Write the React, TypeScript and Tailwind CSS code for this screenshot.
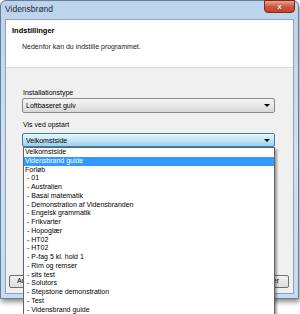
import React from "react";

const items = [
  { label: "Velkomstside" },
  { label: "Vidensbrand guide", selected: true },
  { label: "Forløb" },
  { label: "- 01", sub: true },
  { label: "- Australien", sub: true },
  { label: "- Basal matematik", sub: true },
  { label: "- Demonstration af Vidensbranden", sub: true },
  { label: "- Engelsk grammatik", sub: true },
  { label: "- Frikvarter", sub: true },
  { label: "- Hopoglær", sub: true },
  { label: "- HT02", sub: true },
  { label: "- HT02", sub: true },
  { label: "- P-fag 5 kl. hold 1", sub: true },
  { label: "- Rim og remser", sub: true },
  { label: "- sits test", sub: true },
  { label: "- Solutors", sub: true },
  { label: "- Stepstone demonstration", sub: true },
  { label: "- Test", sub: true },
  { label: "- Vidensbrand guide", sub: true },
];

function Arrow() {
  return <div className="w-0 h-0 border-x-[3px] border-t-[3px] border-x-transparent border-t-black" />;
}

export default function App() {
  return (
    <div className="relative w-[300px] h-[314px] overflow-hidden bg-white font-['Liberation_Sans',Arial,sans-serif] text-black">
      {/* Window */}
      <div className="w-[299px] h-[299px] flex flex-col rounded-t-[6px] border border-[#6a7f95] bg-gradient-to-b from-[#bcd3ec] via-[#cfe0f2] to-[#c6dbf1] shadow-[1px_3px_5px_rgba(0,0,0,0.45)]">
        {/* Title bar */}
        <div className="h-[18px] flex items-start justify-between pl-[4px] pr-[3px]">
          <span className="mt-[3px] text-[8.5px] leading-[11px] text-[#1e2a38]">Vidensbrønd</span>
          <div className="w-[31px] h-[13px] -mt-px flex items-center justify-center rounded-b-[4px] border border-[#7a2a1e] bg-gradient-to-b from-[#e9a493] via-[#d0573d] to-[#c2432a]">
            <span className="text-[8px] leading-[8px] font-bold text-white [text-shadow:0_0_1px_#333]">x</span>
          </div>
        </div>

        {/* Client area */}
        <div className="flex-1 mx-[4px] mb-[4px] flex flex-col border border-[#8ea3b9] bg-[#f0f0f0]">
          {/* Header */}
          <div className="h-[48px] bg-white border-b border-[#dcdcdc] pt-[6px]">
            <div className="pl-[6px] text-[7.5px] leading-[9px] font-bold">Indstillinger</div>
            <div className="pl-[16px] mt-[7px] text-[7px] leading-[9px] text-[#1a1a1a]">Nedenfor kan du indstille programmet.</div>
          </div>

          {/* Settings */}
          <div className="flex-1 flex flex-col pl-[16px] pr-[18px]">
            <div className="mt-[20px] pl-px text-[7px] leading-[9px]">Installationstype</div>
            <div className="mt-[1px] h-[15px] flex items-center justify-between pl-[3px] pr-[4px] rounded-[2px] border border-[#8a8a8a] bg-gradient-to-b from-[#f4f4f4] via-[#e9e9e9] to-[#d7d7d7]">
              <span className="text-[7px] leading-[9px]">Loftbaseret gulv</span>
              <Arrow />
            </div>
            <div className="mt-[7px] pl-px text-[7px] leading-[9px]">Vis ved opstart</div>
            <div className="mt-[4px] h-[14px] flex items-center justify-between pl-[3px] pr-[4px] rounded-[2px] border border-[#3c7fb1] bg-gradient-to-b from-[#eaf6fd] via-[#c4e5f6] to-[#98d1ef]">
              <span className="text-[7px] leading-[9px]">Velkomstside</span>
              <Arrow />
            </div>
          </div>

          {/* Buttons */}
          <div className="h-[18px] flex items-start justify-between pl-[3px] pr-[4px]">
            <div className="w-[50px] h-[13px] flex items-center pl-[7px] rounded-[2px] border border-[#707070] bg-gradient-to-b from-[#f2f2f2] to-[#dddddd] text-[7px]">
              Anvend
            </div>
            <div className="w-[50px] h-[13px] flex items-center justify-end pr-[9px] rounded-[2px] border border-[#707070] bg-gradient-to-b from-[#f2f2f2] to-[#dddddd] text-[7px]">
              Annuller
            </div>
          </div>
        </div>
      </div>

      {/* Open dropdown list */}
      <div className="absolute left-[23px] top-[147px] w-[252px] h-[170px] bg-white border border-[#646464] shadow-[2px_2px_2px_rgba(0,0,0,0.35)]">
        {items.map((item, i) => (
          <div
            key={i}
            className={
              item.selected
                ? "h-[8.75px] leading-[8.75px] text-[7px] pl-[1px] bg-[#3399ff] text-white"
                : item.sub
                ? "h-[8.75px] leading-[8.75px] text-[7px] pl-[3px]"
                : "h-[8.75px] leading-[8.75px] text-[7px] pl-[1px]"
            }
          >
            {item.label}
          </div>
        ))}
      </div>
    </div>
  );
}
